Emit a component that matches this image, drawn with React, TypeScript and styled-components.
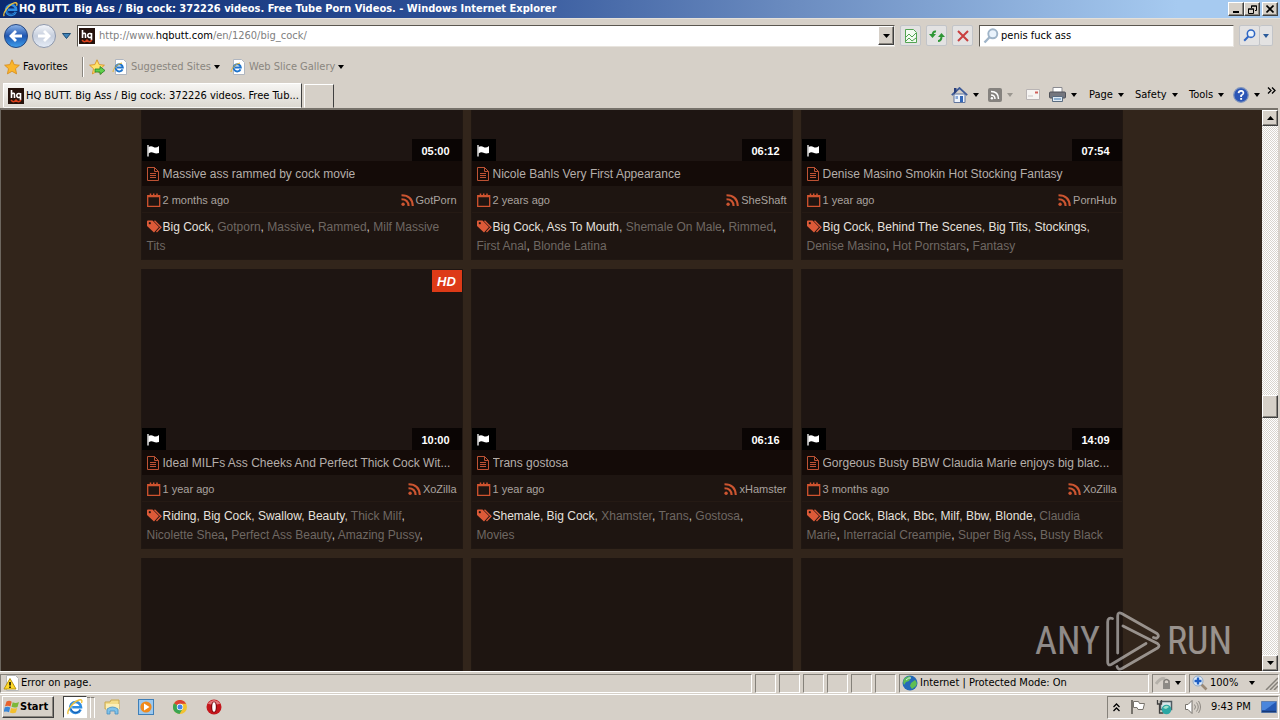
import React from "react";
import styled, { createGlobalStyle, css } from "styled-components";

const UI = `"DejaVu Sans Condensed", "DejaVu Sans", Tahoma, sans-serif`;
const WEB = `"Liberation Sans", Arial, sans-serif`;
const face = "#d6d0c8";

const Global = createGlobalStyle`
  * { box-sizing: border-box; }
  body { margin: 0; background: ${face}; }
  button, input { font: inherit; color: inherit; padding: 0; margin: 0; border: 0; background: none; }
  a { color: inherit; text-decoration: none; }
  svg { display: block; flex: none; }
`;

const raised = css`
  border: 1px solid;
  border-color: #fff #404040 #404040 #fff;
  box-shadow: inset -1px -1px #8a867f;
  background: ${face};
`;
const sunken = css`
  border: 1px solid;
  border-color: #85817a #fff #fff #85817a;
`;

const Window = styled.div`
  height: 100vh;
  display: flex;
  flex-direction: column;
  font: 11px/16px ${UI};
  color: #000;
  background: ${face};
  overflow: hidden;
`;

/* title bar */
const TitleBar = styled.header`
  height: 18px;
  flex: none;
  display: flex;
  align-items: center;
  padding: 0 2px 0 3px;
  background: linear-gradient(90deg, #0b2a70 0%, #2c4f96 35%, #6b8cc0 62%, #a6caf0 92%);
`;
const WindowTitle = styled.h1`
  margin: 0 0 0 1px;
  flex: 1;
  font: bold 11px/18px ${UI};
  color: #fff;
  white-space: nowrap;
`;
const CaptionButton = styled.button<{ $gap?: boolean }>`
  ${raised}
  width: 16px;
  height: 14px;
  margin-left: ${(p) => (p.$gap ? 2 : 0)}px;
  display: flex;
  align-items: center;
  justify-content: center;
`;

/* navigation row */
const NavRow = styled.div`
  height: 34px;
  flex: none;
  display: flex;
  align-items: center;
  border-top: 1px solid #e4e0da;
  padding: 0 7px 0 2px;
`;
const Plain = styled.button`
  display: flex;
  align-items: center;
  justify-content: center;
`;
const NavButton = styled(Plain)`
  width: 28px;
`;
const HistoryButton = styled(Plain)`
  width: 17px;
`;
const Field = styled.div<{ $fixed?: boolean }>`
  height: 22px;
  margin-left: ${(p) => (p.$fixed ? 6 : 2)}px;
  flex: ${(p) => (p.$fixed ? "0 0 255px" : "1")};
  display: flex;
  align-items: center;
  background: #fff;
  border: 1px solid;
  border-color: #5a564f #e8e4de #e8e4de #5a564f;
  padding: ${(p) => (p.$fixed ? "0 2px 0 3px" : "0 0 0 1px")};
`;
const UrlText = styled.div`
  flex: 1;
  margin-left: 4px;
  color: #808080;
  white-space: nowrap;
  b { font-weight: normal; color: #000; }
`;
const SearchInput = styled.input`
  flex: 1;
  min-width: 0;
  outline: 0;
  margin-left: 2px;
  height: 18px;
`;
const DropButton = styled.button`
  ${raised}
  width: 16px;
  height: 19px;
  display: flex;
  align-items: center;
  justify-content: center;
`;
const ToolButton = styled(Plain)<{ $w?: number; $joined?: boolean }>`
  width: ${(p) => p.$w ?? 21}px;
  height: 21px;
  margin-left: ${(p) => (p.$joined ? 0 : 5)}px;
  background: #e3e2e2;
  border: 1px solid #c2c4c8;
  border-left-width: ${(p) => (p.$joined ? 0 : 1)}px;
  border-radius: 2px;
`;

/* favourites row */
const FavRow = styled.div`
  height: 29px;
  flex: none;
  display: flex;
  align-items: center;
  padding-left: 4px;
`;
const FavItem = styled.button<{ $dim?: boolean; $w?: number }>`
  width: ${(p) => (p.$w ? p.$w + "px" : "auto")};
  display: flex;
  align-items: center;
  gap: 3px;
  color: ${(p) => (p.$dim ? "#8a867f" : "#000")};
  white-space: nowrap;
`;
const FavDivider = styled.span`
  width: 2px;
  height: 20px;
  margin: 0 5px 0 0;
  border-left: 1px solid #8a867f;
  border-right: 1px solid #fff;
`;

/* tab row */
const TabRow = styled.div`
  height: 27px;
  flex: none;
  display: flex;
  align-items: flex-end;
  padding-left: 3px;
`;
const Tab = styled.button`
  width: 299px;
  height: 25px;
  display: flex;
  align-items: center;
  gap: 2px;
  padding-left: 4px;
  white-space: nowrap;
  background: linear-gradient(#f6f5f3, #dcd8d1);
  border: 1px solid;
  border-color: #fff #404040 transparent #fff;
`;
const NewTab = styled.button`
  width: 30px;
  height: 24px;
  margin-left: 2px;
  border: 1px solid;
  border-color: #fff #404040 transparent #fff;
`;
const Commands = styled.nav`
  margin-left: auto;
  align-self: center;
  display: flex;
  align-items: center;
  padding-right: 3px;
`;
const Command = styled.button<{ $w: number }>`
  width: ${(p) => p.$w}px;
  display: flex;
  align-items: center;
  gap: 5px;
`;
const More = styled.button`
  align-self: flex-start;
  height: 8px;
  width: 10px;
`;

/* page */
const Viewport = styled.div`
  flex: 1;
  min-height: 0;
  display: flex;
  border-top: 2px solid #77726b;
  border-left: 1px solid #6d675f;
  margin-right: 2px;
`;
const Page = styled.main`
  flex: 1;
  min-width: 0;
  position: relative;
  overflow: hidden;
  background: #32251b;
`;
const Grid = styled.div`
  width: 982px;
  max-width: 100%;
  margin: -130px auto 0;
  display: grid;
  grid-template-columns: repeat(3, 1fr);
  gap: 9px 8px;
`;
const Card = styled.article`
  min-width: 0;
  height: 280px;
  overflow: hidden;
  background: #1e1511;
  font-family: ${WEB};
  border: 1px solid #201712;
  border-top: 0;
`;
const Thumb = styled.div`
  height: 181px;
  position: relative;
  background: #1e1512;
`;
const Flag = styled.span`
  position: absolute;
  left: 0;
  bottom: 0;
  width: 24px;
  height: 22px;
  display: flex;
  align-items: center;
  justify-content: center;
  background: #000;
`;
const Duration = styled.span`
  position: absolute;
  right: 0;
  bottom: 0;
  width: 50px;
  height: 22px;
  padding-right: 2px;
  background: #0a0504;
  color: #fff;
  font: bold 11px/24px ${WEB};
  text-align: center;
`;
const Hd = styled.span`
  position: absolute;
  right: 0;
  top: 1px;
  width: 30px;
  height: 22px;
  background: #dd3a17;
  color: #fff;
  font: italic bold 13px/23px ${WEB};
  text-align: center;
`;
const Title = styled.h2`
  margin: 0;
  height: 25px;
  padding: 1px 5px 0;
  display: flex;
  align-items: center;
  gap: 4px;
  background: #140b08;
  color: #b4aeaa;
  font: 12px/24px ${WEB};
  white-space: nowrap;
  a { overflow: hidden; }
`;
const Meta = styled.div`
  height: 27px;
  padding: 2px 5px 0;
  display: flex;
  align-items: center;
  justify-content: space-between;
  border-bottom: 1px solid #251a14;
  color: #aaa39f;
  font: 11px/24px ${WEB};
`;
const MetaItem = styled.span`
  display: flex;
  align-items: center;
  gap: 2px;
`;
const Tags = styled.p`
  margin: 0;
  padding: 5px 11px 0 5px;
  font: 12px/19px ${WEB};
  svg { display: inline-block; vertical-align: -2px; margin-right: 1px; }
`;
const TagLink = styled.a<{ $main: boolean }>`
  color: ${(p) => (p.$main ? "#e6e1de" : "#6f6863")};
`;
const Comma = styled.span`
  color: #d0cac6;
`;
const ScrollBar = styled.div`
  width: 16px;
  flex: none;
  display: flex;
  flex-direction: column;
  background: repeating-conic-gradient(#fff 0 25%, #d9d5ce 0 50%) 0 0 / 2px 2px;
`;
const ScrollButton = styled.button`
  ${raised}
  height: 16px;
  width: 16px;
  display: flex;
  align-items: center;
  justify-content: center;
`;
const Track = styled.div<{ $grow: number }>`
  flex: ${(p) => p.$grow};
`;
const Grip = styled.div`
  ${raised}
  height: 23px;
`;
const Watermark = styled.div`
  position: absolute;
  right: 30px;
  bottom: 0;
  display: flex;
  align-items: center;
  gap: 6px;
  color: #fff;
  opacity: 0.5;
  font: 400 38px/60px "Roboto Condensed", "Liberation Sans Narrow", Roboto, sans-serif;
`;

/* status bar */
const StatusBar = styled.footer`
  height: 24px;
  flex: none;
  display: flex;
  align-items: center;
  gap: 3px;
  padding: 0 1px 0 0;
  border-top: 1px solid #fff;
  border-bottom: 1px solid #fff;
`;
const Pane = styled.div<{ $w?: number }>`
  ${sunken}
  height: 19px;
  flex: ${(p) => (p.$w ? `0 0 ${p.$w}px` : "1")};
  display: flex;
  align-items: center;
  gap: 2px;
  padding-left: 2px;
  white-space: nowrap;
`;
const Spread = styled.span`
  flex: 1;
`;

/* task bar */
const TaskBar = styled.div`
  height: 25px;
  flex: none;
  display: flex;
  align-items: center;
  padding: 0 1px 1px 2px;
`;
const Start = styled.button`
  ${raised}
  width: 52px;
  height: 22px;
  display: flex;
  align-items: center;
  padding-left: 1px;
  font: bold 11px/16px ${UI};
`;
const ActiveTask = styled.button`
  width: 24px;
  height: 22px;
  margin-left: 9px;
  display: flex;
  align-items: center;
  justify-content: center;
  background: #fff;
  border: 1px solid;
  border-color: #404040 #fff #fff #404040;
`;
const Stack = styled.span`
  width: 4px;
  height: 21px;
  border-right: 1px solid #fff;
  border-top: 1px solid #85817a;
`;
const Launch = styled(Plain)`
  width: 34px;
  height: 22px;
`;
const Tray = styled.div`
  ${sunken}
  margin-left: auto;
  width: 172px;
  height: 23px;
  display: flex;
  align-items: center;
  justify-content: space-between;
  padding: 0 1px 0 5px;
`;

/* icons */
const Down = ({ c = "#000", s = 6 }: { c?: string; s?: number }) => (
  <svg width={s} height="4" viewBox="0 0 6 3" preserveAspectRatio="none"><path d="M0 0h6L3 3z" fill={c} /></svg>
);
const Ie = ({ s = 16 }: { s?: number }) => (
  <svg width={s} height={s} viewBox="0 0 16 16">
    <path d="M13.600 10.500A5.400 5.400 0 1 1 14 8.300H5.200" fill="none" stroke="#2f8de0" strokeWidth="2.600" />
    <path d="M13.200 11A5 5 0 0 1 4 10.200" fill="none" stroke="#1556a8" strokeWidth="1" />
    <path d="M1.300 15C-.8 12.600 5.500 3 12 1c3-.8 3.400 1 2.400 3" fill="none" stroke="#f0c23a" strokeWidth="1.400" />
  </svg>
);
const IePage = () => (
  <svg width="16" height="16" viewBox="0 0 16 16">
    <path d="M3.500.5h8l3 3v12h-11z" fill="#fff" stroke="#b0b6c0" />
    <path d="M10.500 10.300A3.600 3.600 0 1 1 10.800 8.500H5" fill="none" stroke="#1f74cc" strokeWidth="2" />
    <path d="M1 13C1 10 5 5 10 4" fill="none" stroke="#e5b530" />
  </svg>
);
const Fav = () => (
  <svg width="16" height="16" viewBox="0 0 16 16">
    <rect width="16" height="16" fill="#24120c" />
    <path d="M3.500 2v8M3.500 6q3-2 3 1v3M12.500 5v7M12.500 6.500a2 2 0 1 0 0 2" fill="none" stroke="#fff" strokeWidth="1.600" />
    <path d="M3 12q2.500 3.500 5 0q2.500 3.500 5 0" fill="none" stroke="#d8401c" strokeWidth="1.300" />
  </svg>
);
const Arrow = ({ on, flip }: { on?: boolean; flip?: boolean }) => (
  <svg width="26" height="26" viewBox="0 0 26 26">
    <defs>
      <linearGradient id={on ? "nb" : "nf"} x2="0" y2="1">
        <stop offset="0" stopColor={on ? "#8fb6ea" : "#f4f6fa"} />
        <stop offset=".5" stopColor={on ? "#1e55b0" : "#c6cedd"} />
        <stop offset="1" stopColor={on ? "#3fa0ee" : "#e6edf7"} />
      </linearGradient>
    </defs>
    <circle cx="13" cy="13" r="11.500" fill={`url(#${on ? "nb" : "nf"})`} stroke={on ? "#27477f" : "#8d97ab"} />
    <path transform={flip ? "translate(26 0) scale(-1 1)" : undefined} d="M19 13H8.500M13 8l-5 5 5 5" fill="none" stroke="#fff" strokeWidth="2.800" />
  </svg>
);
const Star = ({ add }: { add?: boolean }) => (
  <svg width="16" height="16" viewBox="0 0 16 16">
    <path d="M8 .8l2.200 4.800 5.200.6-3.900 3.500 1.100 5.200L8 12.300l-4.600 2.600 1.100-5.200L.6 6.200l5.200-.6z" fill={add ? "#ffe26a" : "#fbb62c"} stroke="#d58a1a" strokeWidth=".8" />
    {add && <path d="M6 10h5V7.500l5 4-5 4V13H6z" fill="#5fd04a" stroke="#26802a" strokeWidth=".8" />}
  </svg>
);
const Mag = ({ c, s = 16, flip }: { c: string; s?: number; flip?: boolean }) => (
  <svg width={s} height={s} viewBox="0 0 16 16">
    <g transform={flip ? "translate(16 0) scale(-1 1)" : undefined}>
      <circle cx="9.800" cy="5.800" r="4.500" fill="#eaf3fc" stroke={c} strokeWidth="1.900" />
      <path d="M6.500 9.200L1.500 14.500" stroke={c} strokeWidth="2.400" />
    </g>
  </svg>
);
const ZoomIn = () => (
  <svg width="16" height="16" viewBox="0 0 16 16">
    <path d="M9.500 9.500l5 5" stroke="#9a8a78" strokeWidth="2.600" />
    <circle cx="6" cy="6" r="5" fill="#e3effb" stroke="#8fa9c8" />
    <path d="M6 2.500v7M2.500 6h7" stroke="#1f5fc4" strokeWidth="2.400" />
  </svg>
);
const Compat = () => (
  <svg width="14" height="16" viewBox="0 0 14 16"><path d="M1.500 1.500h8l3 3v10h-11z" fill="#f2fbf0" stroke="#53a453" /><path d="M2 9l3-3 3 3 4-4M2 13l3-3 3 3 4-3" fill="none" stroke="#53a453" /></svg>
);
const Refresh = () => (
  <svg width="16" height="16" viewBox="0 0 16 16"><path d="M7 3.500Q3.500 3 3.500 8" fill="none" stroke="#2f9636" strokeWidth="2" /><path d="M0 6h7L3.500 10z" fill="#2f9636" /><path d="M9 13q3.500 0 3.500-5" fill="none" stroke="#2f9636" strokeWidth="2" /><path d="M9 9h7l-3.500-4z" fill="#2f9636" /></svg>
);
const Stop = () => (
  <svg width="12" height="12" viewBox="0 0 12 12"><path d="M1 1l10 10M11 1L1 11" stroke="#c93f3f" strokeWidth="2" /></svg>
);
const Home = () => (
  <svg width="17" height="16" viewBox="0 0 17 16"><path d="M3 7h11v8.500H3z" fill="#eef3fb" stroke="#62769e" /><path d="M.8 8.200L8.500 1l7.700 7.200" fill="none" stroke="#3f5b98" strokeWidth="1.800" /><path d="M3 1h2.500v4L3 7z" fill="#2b3f7a" /><path d="M9 9h3v6H9z" fill="#3266b8" /><path d="M4.500 9H7v3H4.500z" fill="#8aa9d8" /></svg>
);
const FeedBox = () => (
  <svg width="14" height="14" viewBox="0 0 14 14"><rect width="14" height="14" rx="2" fill="#85827e" /><path d="M3 3.500q7.500 0 7.500 7.500M3 7q4 0 4 4" fill="none" stroke="#fff" strokeWidth="1.500" /><circle cx="3.900" cy="10.200" r="1.200" fill="#fff" /></svg>
);
const Mail = () => (
  <svg width="14" height="11" viewBox="0 0 14 11"><path d="M.5.5h13v10H.5z" fill="#f6f4f2" stroke="#b9b4b4" /><path d="M9 2.500h3v2H9z" fill="#d0605a" /><path d="M2 7h5" stroke="#c8c4c4" /></svg>
);
const Printer = () => (
  <svg width="17" height="15" viewBox="0 0 17 15"><path d="M4 .5h9V6H4z" fill="#fff" stroke="#8a8a90" /><rect x=".5" y="5" width="16" height="6" rx="1" fill="#74767e" stroke="#4f5158" /><path d="M3.500 9.500h10v5h-10z" fill="#dfe9f2" stroke="#5a6c80" /><path d="M5 12h7" stroke="#3f78b0" /></svg>
);
const Help = () => (
  <svg width="16" height="16" viewBox="0 0 16 16"><circle cx="8" cy="8" r="7.300" fill="#2c56b6" stroke="#8296bd" strokeWidth="1.200" /><path d="M5.500 6.200Q5.800 3.800 8.200 3.900 10.600 4.100 10.400 6.200 10.200 7.500 8.100 8.600V10" fill="none" stroke="#fff" strokeWidth="1.700" /><path d="M7.200 11h1.900v1.800H7.200z" fill="#fff" /></svg>
);
const Chevrons = () => (
  <svg width="9" height="7" viewBox="0 0 9 7"><path d="M1 .5l3 3-3 3M5 .5l3 3-3 3" fill="none" stroke="#000" strokeWidth="1.300" /></svg>
);
const FlagIcon = () => (
  <svg width="13" height="13" viewBox="0 0 13 13"><path d="M1 1v11.500" stroke="#fff" strokeWidth="1.300" /><path d="M1.500 3q2.500-1.500 5 0t5.500-1v7q-3 1-5.500-.3T1.500 9.500z" fill="#fff" /></svg>
);
const DocIcon = () => (
  <svg width="12" height="14" viewBox="0 0 12 14"><path d="M.5.5h7l4 4v9H.5zM7.500.5v4h4M3 6.500h6M3 8.500h6M3 10.500h6" fill="none" stroke="#bd5234" /></svg>
);
const CalIcon = () => (
  <svg width="14" height="14" viewBox="0 0 14 14"><path d="M.7 2.700h12v10.600H.7z" fill="none" stroke="#d0532f" strokeWidth="1.300" /><path d="M1 3.500h11.500M3.500.5v3M6.700.5v3M10 .5v3" stroke="#d0532f" strokeWidth="1.500" /></svg>
);
const RssIcon = () => (
  <svg width="13" height="12" viewBox="0 0 13 12"><path d="M.5 1.200Q11.300 1.200 11.800 12M.5 5.200Q7.300 5.200 7.600 12" fill="none" stroke="#cc5531" strokeWidth="2.100" /><circle cx="2.100" cy="10.200" r="1.700" fill="#cc5531" /></svg>
);
const TagIcon = () => (
  <svg width="15" height="13" viewBox="0 0 15 13"><path fillRule="evenodd" d="M0 1.500Q0 .5 1 .5h4.500L12 7l-5 5.500L0 6zM2.800 2a1.100 1.100 0 1 0 .01 0z" fill="#dc5a38" /><path d="M7.500.8L14 7.200 9.500 12" fill="none" stroke="#dc5a38" strokeWidth="1.300" /></svg>
);
const Triangle = () => (
  <svg width="55" height="60" viewBox="0 0 55 60">
    <g fill="none" stroke="#fff" strokeWidth="2.800" strokeLinejoin="round" strokeLinecap="round">
      <path d="M6.500 7.500Q1.700 6 1.700 11V51q0 4 3.500 2.500L40 32.500" />
      <path d="M11.700 42V5q0-4.500 4-2.500L51 22.500q3 3-.5 4.800l-3-.8" />
      <path d="M17 15l34.500 17.500q3 2.300 0 4.500L16 57.500q-4 2-5-2" />
    </g>
  </svg>
);
const Warn = () => (
  <svg width="16" height="16" viewBox="0 0 16 16"><path d="M3.500.5h9l3 3v12h-12z" fill="#fff" stroke="#b8b8b8" /><path d="M7 3.500L13 14H1z" fill="#ffd928" stroke="#b89410" /><path d="M7 7v3.500M7 11.500v1.500" stroke="#000" strokeWidth="1.500" /></svg>
);
const Globe = () => (
  <svg width="16" height="16" viewBox="0 0 16 16"><circle cx="8" cy="8" r="7.500" fill="#2469b8" /><path d="M3 3q4-3 6-1l-2 4-3 1-2 3Q0 6 3 3zM9 8l4-3q3 3 1 6l-4 3-2-3z" fill="#5fbe52" /><path d="M4 5q3-3 5-2" stroke="#cfeaf8" fill="none" /></svg>
);
const Lock = () => (
  <svg width="18" height="16" viewBox="0 0 18 16"><path d="M1 9q5-7 9-5" fill="none" stroke="#b5b1aa" strokeWidth="3" /><path d="M9 8V6q2.500-3 5 0v2" fill="none" stroke="#7d7a75" strokeWidth="1.500" /><rect x="8" y="8" width="7" height="6" fill="#8d8a85" /></svg>
);
const WinFlag = () => (
  <svg width="16" height="16" viewBox="0 0 16 16"><path d="M2.500 2.500q3-1.500 5.200.3L6.500 7.500Q4 6 1 7.300z" fill="#e8622c" /><path d="M8.700 3.300q3 1.300 6.300-.3l-1.500 5q-3 1.300-6-.2z" fill="#7cb83a" /><path d="M.8 8.300q3-1.300 5.400.2L5 13.300Q2.500 12-.5 13z" fill="#3a86d6" /><path d="M7.200 8.900q3 1.300 6 .2l-1.300 4.500q-3 1.300-6 0z" fill="#f3bf2e" /></svg>
);
const Folder = () => (
  <svg width="17" height="16" viewBox="0 0 17 16"><path d="M1 3h5l1-2h8v9H1z" fill="#f3dc8a" stroke="#c9a850" /><path d="M2 5h13v6H2z" fill="#fbeeb8" /><path d="M3 15V10q5.500-4 11 0v5h-3v-3H6v3z" fill="#7fc2ea" stroke="#4a8fc0" strokeWidth=".8" /></svg>
);
const Player = () => (
  <svg width="16" height="16" viewBox="0 0 16 16"><rect x=".5" y=".5" width="15" height="15" fill="#9cc8ee" stroke="#3f7fb8" /><circle cx="8" cy="8" r="5.600" fill="#f08a1c" /><path d="M6 4.500l5.500 3.500L6 11.500z" fill="#fff" /></svg>
);
const Chrome = () => (
  <svg width="14" height="14" viewBox="0 0 14 14"><circle cx="7" cy="7" r="7" fill="#f2c230" /><path d="M7 7L1 3.300A7 7 0 0 1 13.200 3.700H7z" fill="#dc4234" /><path d="M7 7L1 3.300A7 7 0 0 0 6.500 14L9.800 8.600z" fill="#3aa552" /><circle cx="7" cy="7" r="3.200" fill="#fff" /><circle cx="7" cy="7" r="2.500" fill="#4285e8" /></svg>
);
const Opera = () => (
  <svg width="16" height="16" viewBox="0 0 16 16"><circle cx="8" cy="8" r="7.500" fill="#c4161c" /><path d="M1.500 4.500Q8-2.500 14.500 4.500 8 7 1.500 4.500z" fill="#e2777a" /><ellipse cx="8" cy="8" rx="3" ry="5.500" fill="#7a0c10" /><ellipse cx="8" cy="8" rx="1.800" ry="4.800" fill="#fff" /></svg>
);
const UpChevrons = () => (
  <svg width="7" height="9" viewBox="0 0 7 9"><path d="M.5 4l3-3 3 3M.5 8l3-3 3 3" fill="none" stroke="#000" strokeWidth="1.300" /></svg>
);
const TrayFlag = () => (
  <svg width="16" height="16" viewBox="0 0 16 16"><path d="M2 1v14" stroke="#77736c" strokeWidth="2" /><path d="M3.500 2.500h5l1 2h5l-1.500 6H8l-1-2H3.500z" fill="#fff" stroke="#77736c" /></svg>
);
const Net = () => (
  <svg width="17" height="16" viewBox="0 0 17 16"><path d="M4.500 2.500h11v8h-11z" fill="#d8e6ea" stroke="#4f5a60" strokeWidth="1.500" /><path d="M1.500 1v4h4V1M3.500 5v9h4" fill="none" stroke="#3f3f3f" strokeWidth="1.300" /><circle cx="10.500" cy="10.500" r="4.800" fill="#2ba7a4" /><path d="M7 9q3-4 6-1l-3 2z" fill="#9fe0c8" /></svg>
);
const Speaker = () => (
  <svg width="17" height="16" viewBox="0 0 17 16"><path d="M1.500 5.500H4l4-4v13l-4-4H1.500z" fill="#fff" stroke="#77736c" /><path d="M10.500 5.500q2 2.500 0 5M12.500 3.500q3.500 4.500 0 9M14.500 2q4 6 0 12" fill="none" stroke="#8d8982" /></svg>
);
const Desktop = () => (
  <svg width="16" height="13" viewBox="0 0 16 13"><path d="M.5.5h15v11H.5z" fill="#2459b4" stroke="#5f7fae" /><path d="M1 1h14L4 9H1z" fill="#4a86dc" /><path d="M1 10.500h14" stroke="#173a78" strokeWidth="1.500" /></svg>
);
const ResizeGrip = () => (
  <svg width="13" height="13" viewBox="0 0 13 13"><path d="M1 13L13 1M5 13l8-8M9 13l4-4" stroke="#85817a" strokeWidth="1.500" /></svg>
);

interface Video {
  title: string;
  age: string;
  site: string;
  time: string;
  main: string[];
  more: string[];
  hd?: boolean;
}
const videos: Video[] = [
  { title: "Massive ass rammed by cock movie", age: "2 months ago", site: "GotPorn", time: "05:00", main: ["Big Cock"], more: ["Gotporn", "Massive", "Rammed", "Milf Massive Tits"] },
  { title: "Nicole Bahls Very First Appearance", age: "2 years ago", site: "SheShaft", time: "06:12", main: ["Big Cock", "Ass To Mouth"], more: ["Shemale On Male", "Rimmed", "First Anal", "Blonde Latina"] },
  { title: "Denise Masino Smokin Hot Stocking Fantasy", age: "1 year ago", site: "PornHub", time: "07:54", main: ["Big Cock", "Behind The Scenes", "Big Tits", "Stockings"], more: ["Denise Masino", "Hot Pornstars", "Fantasy"] },
  { title: "Ideal MILFs Ass Cheeks And Perfect Thick Cock Wit...", age: "1 year ago", site: "XoZilla", time: "10:00", main: ["Riding", "Big Cock", "Swallow", "Beauty"], more: ["Thick Milf", "Nicolette Shea", "Perfect Ass Beauty", "Amazing Pussy", ""], hd: true },
  { title: "Trans gostosa", age: "1 year ago", site: "xHamster", time: "06:16", main: ["Shemale", "Big Cock"], more: ["Xhamster", "Trans", "Gostosa", "Movies"] },
  { title: "Gorgeous Busty BBW Claudia Marie enjoys big blac...", age: "3 months ago", site: "XoZilla", time: "14:09", main: ["Big Cock", "Black", "Bbc", "Milf", "Bbw", "Blonde"], more: ["Claudia Marie", "Interracial Creampie", "Super Big Ass", "Busty Black"] },
];

const VideoCard = ({ v }: { v: Video }) => {
  const all = [...v.main, ...v.more];
  return (
    <Card>
      <Thumb>
        <Flag><FlagIcon /></Flag>
        {v.hd && <Hd>HD</Hd>}
        <Duration>{v.time}</Duration>
      </Thumb>
      <Title><DocIcon /><a href="#video">{v.title}</a></Title>
      <Meta>
        <MetaItem><CalIcon />{v.age}</MetaItem>
        <MetaItem><RssIcon />{v.site}</MetaItem>
      </Meta>
      <Tags>
        <TagIcon />
        {all.map((t, i) => (
          <React.Fragment key={i}>
            {t && <TagLink href="#tag" $main={i < v.main.length}>{t}</TagLink>}
            {i < all.length - 1 && <Comma>, </Comma>}
          </React.Fragment>
        ))}
      </Tags>
    </Card>
  );
};

export default function App() {
  return (
    <Window>
      <Global />
      <TitleBar>
        <Ie s={15} />
        <WindowTitle>HQ BUTT. Big Ass / Big cock: 372226 videos. Free Tube Porn Videos. - Windows Internet Explorer</WindowTitle>
        <CaptionButton aria-label="Minimize"><svg width="8" height="8"><path d="M1 6h6v2H1z" /></svg></CaptionButton>
        <CaptionButton aria-label="Restore"><svg width="9" height="9"><path d="M3.500 3V1h5v4.500H7M.5 4h5v4.500h-5zM3 1h6M0 4h6" fill="none" stroke="#000" /></svg></CaptionButton>
        <CaptionButton aria-label="Close" $gap><svg width="8" height="8"><path d="M.5.5l7 7M7.500.5l-7 7" stroke="#000" strokeWidth="1.600" /></svg></CaptionButton>
      </TitleBar>
      <NavRow>
        <NavButton aria-label="Back"><Arrow on /></NavButton>
        <NavButton aria-label="Forward"><Arrow flip /></NavButton>
        <HistoryButton aria-label="Recent pages"><svg width="9" height="6"><path d="M.5.5h8l-4 5z" fill="#3f83b8" stroke="#1d4a73" /></svg></HistoryButton>
        <Field>
          <Fav />
          <UrlText>http://www.<b>hqbutt.com</b>/en/1260/big_cock/</UrlText>
          <DropButton aria-label="Show addresses"><Down s={7} /></DropButton>
        </Field>
        <ToolButton aria-label="Compatibility view"><Compat /></ToolButton>
        <ToolButton aria-label="Refresh"><Refresh /></ToolButton>
        <ToolButton aria-label="Stop"><Stop /></ToolButton>
        <Field $fixed>
          <Mag c="#9fb4c8" />
          <SearchInput aria-label="Search" defaultValue="penis fuck ass" />
        </Field>
        <ToolButton aria-label="Search"><Mag c="#2f66c4" s={13} /></ToolButton>
        <ToolButton $w={13} $joined aria-label="Search options"><Down c="#2a5a9a" /></ToolButton>
      </NavRow>
      <FavRow>
        <FavItem $w={78}><Star />Favorites</FavItem>
        <FavDivider />
        <FavItem $w={23} aria-label="Add to favorites bar"><Star add /></FavItem>
        <FavItem $dim $w={118}><IePage />Suggested Sites<Down /></FavItem>
        <FavItem $dim><IePage />Web Slice Gallery<Down /></FavItem>
      </FavRow>
      <TabRow>
        <Tab><Fav />HQ BUTT. Big Ass / Big cock: 372226 videos. Free Tub...</Tab>
        <NewTab aria-label="New tab" />
        <Commands>
          <Command $w={37} aria-label="Home"><Home /><Down /></Command>
          <Command $w={38} aria-label="Feeds"><FeedBox /><Down c="#9a968f" /></Command>
          <Command $w={23} aria-label="Read mail"><Mail /></Command>
          <Command $w={40} aria-label="Print"><Printer /><Down /></Command>
          <Command $w={46}>Page<Down /></Command>
          <Command $w={54}>Safety<Down /></Command>
          <Command $w={44}>Tools<Down /></Command>
          <Command $w={34} aria-label="Help"><Help /><Down /></Command>
          <More aria-label="More commands"><Chevrons /></More>
        </Commands>
      </TabRow>
      <Viewport>
        <Page>
          <Grid>
            {videos.map((v) => <VideoCard key={v.title} v={v} />)}
            <Card /><Card /><Card />
          </Grid>
          <Watermark><span>ANY</span><Triangle /><span>RUN</span></Watermark>
        </Page>
        <ScrollBar>
          <ScrollButton aria-label="Scroll up"><svg width="7" height="4"><path d="M0 4h7L3.500 0z" /></svg></ScrollButton>
          <Track $grow={268} />
          <Grip />
          <Track $grow={237} />
          <ScrollButton aria-label="Scroll down"><Down s={7} /></ScrollButton>
        </ScrollBar>
      </Viewport>
      <StatusBar>
        <Pane><Warn />Error on page.</Pane>
        {[0, 1, 2, 3, 4, 5].map((i) => <Pane key={i} $w={21} />)}
        <Pane $w={250}><Globe />Internet | Protected Mode: On</Pane>
        <Pane $w={34}><Lock /><Down /></Pane>
        <Pane $w={90}><ZoomIn />100%<Spread /><Down /><Spread /><ResizeGrip /></Pane>
      </StatusBar>
      <TaskBar>
        <Start><WinFlag />Start</Start>
        <ActiveTask aria-label="Internet Explorer"><Ie /></ActiveTask>
        <Stack /><Stack />
        <Launch aria-label="Explorer"><Folder /></Launch>
        <Launch aria-label="Media player"><Player /></Launch>
        <Launch aria-label="Chrome"><Chrome /></Launch>
        <Launch aria-label="Opera"><Opera /></Launch>
        <Tray><UpChevrons /><TrayFlag /><Net /><Speaker /><span>9:43 PM</span><Desktop /></Tray>
      </TaskBar>
    </Window>
  );
}
